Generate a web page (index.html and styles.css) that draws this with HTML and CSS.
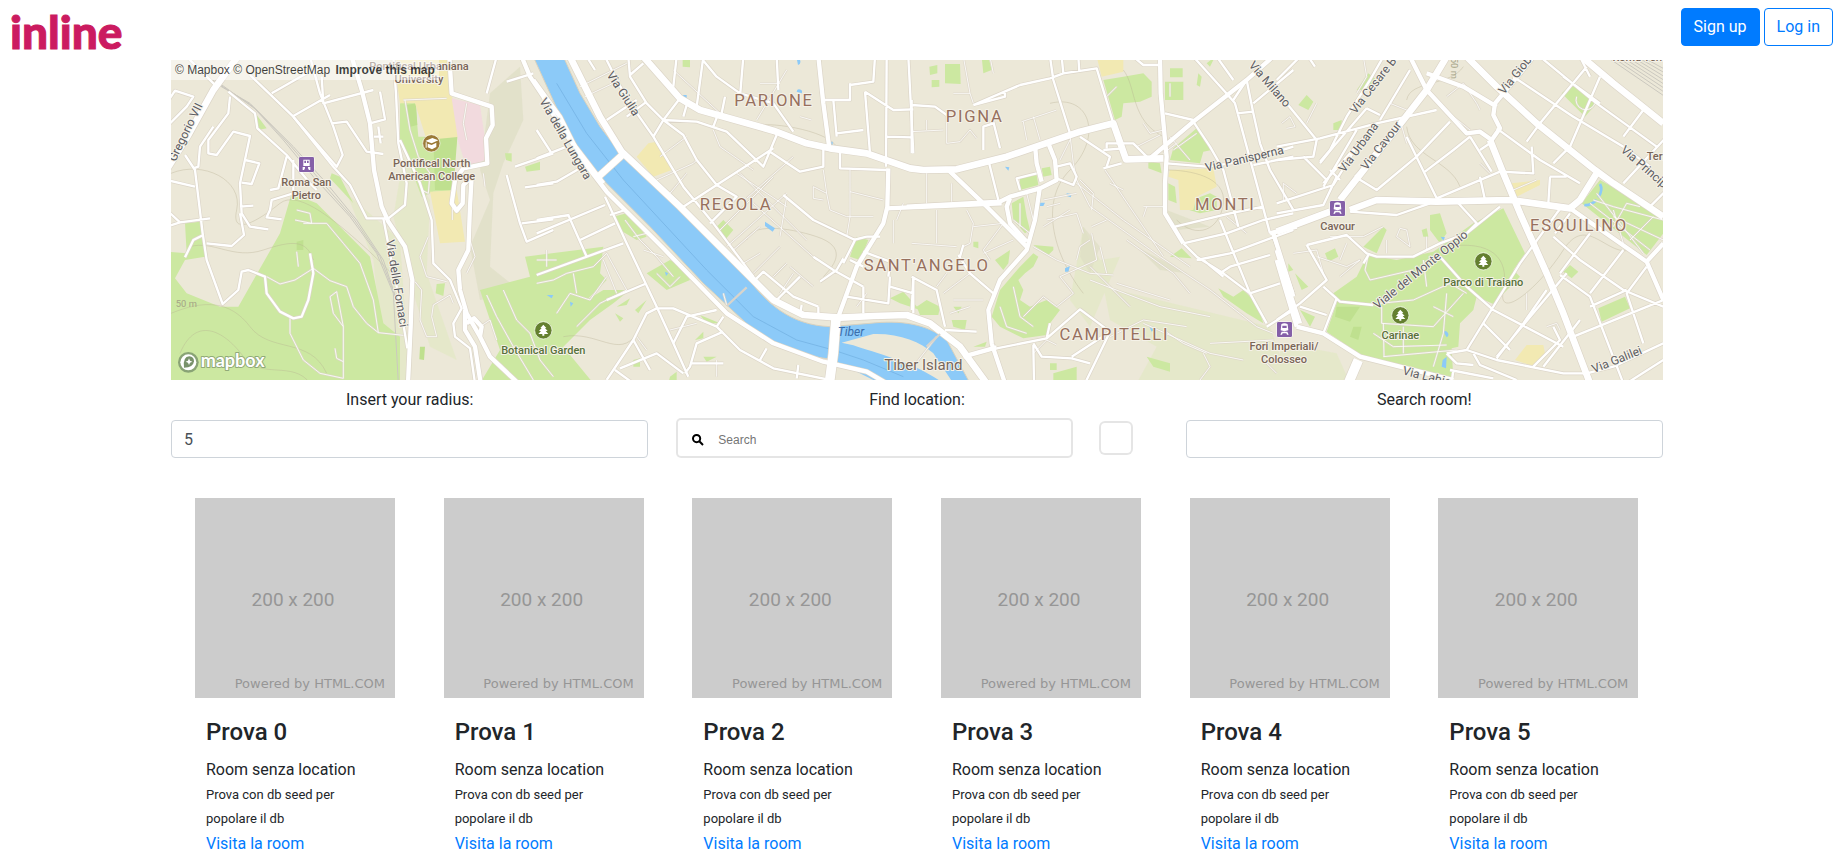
FILE: index.html
```html
<!DOCTYPE html>
<html lang="it">
<head>
<meta charset="utf-8">
<title>inline</title>
<link rel="stylesheet" href="styles.css">
</head>
<body>
<header class="topbar">
  <a class="brand" href="#">inline</a>
  <nav class="auth">
    <button class="btn btn-primary" type="button">Sign up</button>
    <button class="btn btn-outline" type="button">Log in</button>
  </nav>
</header>
<main class="page">
  <section class="map" aria-label="Map">
    <svg class="map-canvas" viewBox="3 0 4476 960" preserveAspectRatio="xMidYMid slice">
      <defs>
        <g id="roads">
          <!-- west -->
          <g>
            <path class="w4" d="M210-20L130 90 55 225-20 345"/>
            <path class="w3" d="M545-10L575 90 600 190 612 330 635 440 655 485 705 560 727 660 722 800 714 970"/>
            <path class="w3" d="M838-10L845 100 965 140 968 195 948 235 952 310 880 325 855 360 845 430 860 452 878 430 880 375 905 350 900 440 895 570 865 630 870 690 890 760 930 830 960 890 1045 970"/>
            <path class="w2" d="M50-10L140 80M240 45L370 170 490 320 540 375 590 475 655 475 705 435 710 370 685 250 678 100 670-10M690 240L750 370 785 480 790 610 840 660 875 745 850 790 855 830 900 865 915 970"/>
            <path class="w3" d="M885 750L885 810 915 860 932 970M890 790L912 775 935 800 930 830"/>
            <path class="w2" d="M175 95L255 160 262 205 350 285 420 370 440 390M420-10L450 100 490 200 518 285 500 320 370 170M305 100L410 40M370 168L480 105M455 50L460 130 610 90M485 190L530 185 560 230 590 275 640 282M600 190L645 178 630 95M612 230L640 230M625 200L632 250M180 110L175 160 115 240 115 280 140 285 190 215 240 228 210 370 215 460 240 500 295 508M225 300L268 310 245 372 215 368M350 290L325 385 300 390M370 300L370 400 305 420 300 450 290 472 335 478M210 440L250 437M-10 200L50 140 70 110 15 92-10 130M-10 360L75 380M45 285L75 330 98 520 110 600 158 732 205 690 215 635 235 630 285 650 290 700 330 755 370 775 395 770 415 720 430 640 420 580M-10 500L30 487 120 475M-10 450L30 487M45 592L70 540 100 525M110 550L185 558 222 525 210 460M70 325L85 320 90 260 130 200M640 475L660 580 690 730 712 865M980-10L950 100M1010 345L1050 490 1070 545 1150 510M1055 490L1150 478M1035 320L1150 280M1065 382L1150 370M1010 65L1090 40"/>
            <path class="w3" d="M1055-10L1080 50 1120 110 1170 200 1300 370"/>
            <path class="w1" d="M290 650L330 672 375 660 430 625 480 662 530 680 550 740 590 790 625 818 700 826M625 818L610 720 570 610 520 550 470 490 400 490M360 775L360 820 400 900 450 940 520 955 520 800 500 695 480 710 490 760 520 800M495 865L500 895 520 905M700 120L830 115M705 120L720 210 745 290 780 340 775 400 755 390M775 530L750 590 770 650 830 665M735 665L755 690 750 780 770 830 800 830 785 770 790 735 840 705 850 730M847 445L847 480M1000 690L1040 780 1080 820 1110 900 1150 950M950 705L980 770 1030 860 1090 960M900 540L915 590 890 640M940 340L945 380M890 130L880 190 890 240M930 800L960 780 980 840M380 575L385 620M380 450L420 460 425 490 375 480"/>
          </g>
          <!-- river side -->
          <g transform="translate(1110 0)">
            <path class="w4" d="M90-10L180 170 245 275 420 440 620 640 700 720 790 765 900 773 1000 768 1100 765 1170 790 1260 860 1340 970"/>
            <path class="w3" d="M-20 60L60 170 120 290 200 395 370 565 560 760 700 850 850 905 980 935 1040 970"/>
            <path class="w4" d="M250 282L170 355"/>
            <path class="w4" d="M310-10L420 115 480 150 700 212 800 250 870 265 980 280 1110 325 1150 330 1250 328 1400 290 1620 215 1720 190 1758 298 1870 295"/>
            <path class="w3" d="M835-10L850 130 868 265M1045 325L1042 440 1030 490 950 620 895 770"/>
            <path class="w5" d="M888 775L880 880 868 970"/>
            <path class="w3" d="M1040 445L1200 438 1385 430"/>
            <path class="w2" d="M195 410L260 550 350 740 400 850 445 950M-10 375L50 365 120 325M-10 295L80 260M-10 210L35 280M-10 520L195 435M120 540L225 490M85 465L140 590M-10 480L88 465M-10 645L250 550M200 720L315 672M210 465L255 450M350 745L320 760 280 840 200 960M350 745L400 745 530 800 600 870 700 925 870 960M530 750L440 770 400 850M550 770L530 800 550 820M550 815L470 850 450 920 435 940M240 925L350 880 430 940M280 840L330 930M225 930L280 970M450 910L550 910M660 900L680 865M770 955L775 915"/>
            <path class="w2" d="M140-10L165 30M195-10L230 60 270 130 340 230 430 380 520 490 640 650M265-10L270 50 320 130 370 180 470 185 560 215 670 320 710 225M270 45L310 10M410-10L400 80M490-10L470 140M320 125L260 170M200 180L290 120M340 230L370 180 430 225 470 300 530 375 590 410 510 490M430 440L530 375 700 265M370 180L420 115M430 170L440 135M520 200L535 160M480-10L530 50 600 100 700 130 760 215M710-10L715 90M545 160L555 110M610-10L600 110M850 270L850 320 780 335 690 275M900 275L900 325 1040 330M730 405L820 480 945 540M940 540L980 530M980 530L1020 530M910 610L945 540M820 590L880 630 970 680M910 595L890 630 840 665M640 665L670 635 760 710 835 740M710 720L780 650M785 735L780 765M835 740L835 770M920 710L1045 730 1050 650M970 680L970 760M1050 680L1120 700M1120 650L1115 750M970 575L1050 605 1045 650M930 600L970 620M855 120L930 120 930 75 1000 65 1005-10M930 110L930 70M880 120L890 230M975 95L990 280M890 220L970 210M975 95L1060 150 1120 148M1040-10L1038 320M1040 230L1115 232M1105-10L1120 280"/>
            <path class="w1" d="M120 80L260 10M135 110L240 60M400 30L540 160M590 340L740 440M620 415L760 290M640 430L830 600M600 340L800 540M540 510L700 350M560 560L740 400M580 570L660 500M720 530L740 410M610 610L660 580M640 640L720 560M700 650L740 610M750 620L820 680M760 640L720 700M850 330L860 400 820 380 820 415 850 420M860 400L870 450 920 470 1000 470M930 330L930 470 920 530M930 395L1030 420M650 180L740 30M660 70L720 70M780 170L815 180M520 210L540 260 640 330M350 360L460 310M390 400L440 340M360 290L440 230M460 310L470 300"/>
            <path class="w1" d="M-10 670L40 660 80 640 160 620 200 580 260 690 180 730 110 800M50 760L90 700 150 720 200 650M100 640L110 700M190 600L230 700M20 570L20 620M-10 600L50 600M255 480L300 540 350 590 400 650M280 530L320 520M310 570L370 590M390 810L470 790M290 830L320 870M530 900L530 950M550 700L560 735M350 640L390 680 420 650M950 740L980 700M1060 480L1060 550M1090 430L1070 480"/>
          </g>
          <!-- centre -->
          <g transform="translate(2220 0)">
            <path class="w3" d="M110 325L220 430 350 560M-10 440L270 425 300 410 390 385 440 360 435 300 415 250M375 255L380 310 395 365M300 415L290 440 300 490 350 545M390 380L375 480 350 570 270 660 235 750 245 850 285 970"/>
            <path class="w3" d="M750-10L752 100 765 240 770 290 765 370 765 460 820 550M1010 60L850 185 720 295M1010 60L1100-20M160 890L260 862"/>
            <path class="w2" d="M260 865L410 835 510 748 600 815 525 970M860 600L960 580 1150 510M600 815L485 890M370 855L372 970M370 850L395 890 485 895 540 910M420-10L430 60 480 220M330 75L420 55 460 40 560 25 610 190M455-10L460 40M505-10L508 35M190 135L330 75M190 135L285 110 285 95M250 185L270 265M220 270L220 200 250 190M235 300L265 420M5 135L75 140 110 165M5 120L5 280M440 320L480 310 500 350 490 375 440 355M330 390L320 355 380 340M510 230L600 290 590 320M580 325L635 310M590 265L590 250 670 250 710 290M580 270L640 265M670-10L700 15 750 15M765 160L850 180M770 310L890 320 1000 305 1150 260M1030 315L1150 290M850 185L900 260 940 330 985 500M850-10L945 95 975 130 1010 260 1080 520M920-10L970 60M1010 60L970 120M1010 60L1030 160 1050 250 1080 330 1150 450M980 160L1030 155M1030 130L1150 30M795 500L960 460 1060 440M820 550L950 520 1060 480 1150 460M820 550L860 590 940 640 1020 700 1070 790M930 480L1020 700 1110 670M930 640L960 620 1080 585M880 600L940 650M1090 530L1150 700M1070 800L1150 750M5 650L80 690 105 800M10 650L10 760M105 810L200 815M145 585L180 640 250 700M160 555L150 590M420 790L410 835"/>
            <path class="w3" d="M1080 520L1160 500M1090 520L1150 710"/>
            <path class="w1" d="M480 225L490 310 500 360 540 440 750 590 900 690 1040 800 1090 820M585 330L760 590M500 370L640 480 840 620M600 370L640 390M480 240L450 300M130 100L180 100M160-10L180 100 190 130M240-10L250 40M335 185L440 150M340 185L350 240M370 170L390 240M50 180L50 210M5 215L100 210M110 165L110 250 150 245 180 210 200 235M50 340L50 430M125 370L125 425M170 450L190 490 180 550 160 560M80 450L80 550M5 550L140 560M190 500L280 490 220 570 240 600M220 580L310 540M180 640L100 700M110 640L80 680M130 720L220 720M120 760L180 740M370 560L440 600 540 640 610 645M545 500L590 480M545 520L560 600 450 650 490 700 440 740 400 710 340 770M540 540L510 560 500 600M570 560L590 640M410 480L500 460 520 520M400 500L480 450M400 420L500 400M410 440L450 430M510 360L550 400 545 450M330 430L330 500M310 480L360 520M350 400L370 480M310 680L330 770 370 800M270 740L290 800 350 820M700 190L720 220 760 210M680 260L750 225M780 230L840 300M790 270L860 220M540 660L750 740 900 770M620 670L780 720M650 540L790 640 840 700M700 790L900 880 1000 900M880 880L900 920 870 960M760 810L820 850 890 880M900 850L1090 840M540 620L660 740M600 830L700 780 830 800M370 880L410 840 440 855M1060 900L1100 940M10 920L80 830M590 110L620 80M780 70L780 110M950 470L1010 520M760 280L800 250M700 440L760 440M710 440L700 470"/>
          </g>
          <!-- east -->
          <g transform="translate(3330 0)">
            <path class="w4" d="M500-10L440 90 370 180 290 280 180 420M560-10L650 80 770 190 945 330 1000 370 1150 470M905-10L1000 70 1150 190M210 450L290 420 470 425 690 420 870 445 900 420 950 340M-10 515L150 455M630 240L670 340 720 460 800 640 850 760 930 970"/>
            <path class="w3" d="M390-10L440 90 560 220 600 215 635 240 660 205 640 165 645 130 720 40 760-10M440 40L550 80 650 140M870 445L1100 605 1150 550M1100 605L1150 720M-10 570L30 700 60 790M-10 600L20 700 50 800M50 800L130 820 240 890 520 960"/>
            <path class="w5" d="M235 900L205 970"/>
            <path class="w2" d="M20 130L110 240 100 290-10 300M-10 260L120 235 290 190 470 150M-10 60L60-10M85-10L105 20M120 305L150 270 200 170 270 60 310-10M260 145L160 260 120 310M260 145L300 165M390 30L300 180M130 370L290 190M230 210L130 380M70 290L140 360M-10 430L160 375 230 260M-10 460L130 435 170 350M150 330L180 360M225 350L290 390 410 290 510 185M270 310L225 350M380 230L470 415M435 335L520 270 570 230M470 415L660 335 760 340 755 260M570 230L635 335M600 350L615 420M630 250L600 270M210 455L350 465 450 430M535 430L590 490 550 530M660 440L560 520 480 550 400 590 290 590 260 580 200 525 80 555M80 555L140 660 60 730-10 780M130 680L180 725 280 735M60 740L140 765M170 715L130 820M265 585L250 610M480 590L560 680 640 750 850 860M650 205L780 300 900 370M740 245L780 190 920 20M820 310L870 260 960 50M700 50L880 170 1030 260 1110 320M780-10L950 130 1130 260M850 50L960 130M1030 370L1160 230M900-10L930 50M1090 150L1030 230M1110 440L1160 390M810 350L860 350M810 350L805 430M850 435L830 460 720 610 560 870M820 530L900 600 1030 690 1150 740M825 520L870 460M930 520L840 640M840 645L930 710 1030 970M1030 570L930 700M1100 620L1040 700 1090 850M880 830L1150 720M930 740L1040 690M610 790L690 870M650 890L860 640M790 920L900 780M500 880L560 870 650 900 850 940 920 940 1000 920 1150 850M500 880L530 910 580 915M580 880L600 915 710 960M510 930L640 955M650 895L730 790 800 690M760 920L840 840 820 800M520 930L515 970M1040 970L1150 900"/>
            <path class="w1" d="M250-10L260 50 230 100M5 190L30 170 45 200 20 205M110 130L80 190M330 130L380 150M10 420L10 370 50 400M40 580L110 570 130 640M150 530L250 530 310 500M200 550L180 600M110 590L200 620 240 600 180 650M360 505L350 530 390 560 380 510 360 505M320 540L320 580M440 530L440 570M265 585L255 630 270 660 400 630M300 730L400 720 510 670 560 700M430 600L440 680M305 740L305 790 460 800 550 700M280 820L340 860 500 855M310 890L530 870M370 800L370 880M310 790L312 890M460 740L520 770M500 700L490 820 460 920M600 310L630 340M500 110L550 70 590 130 600 150M570 210L520 170M360 180L380 250M700 390L770 360M740 700L740 750M800 800L830 790 840 810"/>
            <path class="w1" d="M950 400L1090 580M930 430L1110 570M940 420L1000 440 1150 480M1000 470L1150 540M1000 500L1040 430 1080 440M1050 540L1120 470M1030 550L1000 450M890 110A28 28 0 1 0 945 130"/>
          </g>
        </g>
      </defs>
      <rect class="land" x="0" y="-10" width="4500" height="990"/>
      <g class="shade">
        <path d="M960 100L1050 20 1060 180 1000 310 970 400 960 620 1060 700 930 720 900 560 960 420 930 330Z"/>
        <path class="light" d="M700 290L780 420 770 640 860 900 780 860 730 700 670 470ZM530 400L690 540 720 970 650 970 610 600ZM2800 680L3300 800 3360 970 2900 970 2960 860 2820 780ZM2740 500L2790 600 2850 590 2760 800 2700 720ZM3340 850L3500 880 3540 970 3300 970Z"/>
        <path d="M2740 500L2790 560 2760 640 2730 590ZM2900 560L3050 640 2970 630ZM2990 450L3120 500 3020 510ZM60 750L110 790 100 850 60 800Z"/>
      </g>
      <g class="green">
        <path d="M-10 575L50 580 45 490 90 485 105 590 45 600 15 655 50 700 150 740 205 740 330 520 365 400 440 430 600 590 640 790 690 830 690 970-10 970ZM260 165L290 205 265 210ZM485 340L510 350 550 430 480 355ZM690 130L735 120 745 230 862 230 850 330 850 392 790 395 755 410 690 240ZM800 672L825 670 820 708 797 700ZM1065 590L1300 560 1290 640 1310 660 1250 720 1300 690 1380 690 1330 730 1260 780 1180 860 1270 970 930 970 990 870 930 690 1080 650ZM1005 280L1025 280 1025 305 1008 300ZM1065 320L1110 305 1110 330 1070 335Z"/>
        <path d="M1330 470L1370 460 1400 490 1430 530 1400 540 1350 510ZM1430 640L1500 600 1550 630 1560 660 1490 690ZM1560 455L1590 480M1640 500L1660 480 1690 510 1665 540ZM2060 530L2095 540 2070 600 2040 590ZM2160 715L2200 695 2250 750 2190 730ZM1340 740L1380 715 1370 735ZM1395 750L1430 720 1405 760ZM1335 760L1360 775 1350 785ZM1590 765L1650 790 1610 790ZM1575 840L1600 815 1600 835ZM1600 890L1640 890 1610 905ZM1500 950L1520 935 1520 970 1495 970ZM1390 900L1410 895 1410 920 1390 920ZM1538-10L1560-10 1560 22 1538 20Z"/>
        <g transform="translate(2220 0)"><path d="M105 12L150 12 152 72 105 70ZM58 20L82 15 82 40 60 45ZM65 60L88 60 88 80 65 82ZM215-10L235-10 245 30 220 40ZM640 50L700 40 725 65 725 110 690 125 640 130 635 170 615 180 580 60ZM780 25L818 25 818 52 780 52ZM765 65L820 65 820 120 765 120ZM865 40L875 50 870 80 860 75ZM890 10L915-10 900 20ZM715 305L750 310 755 340 715 325ZM790 265L860 205 905 270 880 275 870 310 780 300ZM775 370L795 380 800 430 775 420ZM820 430L900 400 920 410 920 450 870 460 820 445ZM330 355L380 345 385 375 330 390ZM395 325L420 320 425 345 400 350ZM305 430L340 410 350 470 360 510 345 520 310 480ZM370 555L430 560 430 570 415 585ZM255 600L300 570 295 610 280 630ZM370 580L385 590 370 620 345 640 325 660 340 690 330 720 360 740 410 720 450 750 420 790 410 825 340 835 270 800 245 770 270 690 330 620ZM190 545L205 545 205 565 190 560ZM20 740L50 720 90 740 85 765 30 765ZM130 740L155 740 145 760ZM125 780L170 780 165 810 130 800ZM190 860L230 845 225 860ZM420 910L440 910 440 930 420 930ZM430 940L500 920 500 970 430 970ZM780 590L815 565 845 595ZM925 685L970 710 1000 690 1040 730 1060 790 1010 760 940 710ZM710 890L780 910 780 935 730 920Z"/></g>
        <g transform="translate(3330 0)"><path d="M230 90L265 40 290 60 265 90ZM55 135L80 105 100 125 85 150ZM160 190L185 180 185 210 160 210ZM845 100L880 70 950 130 915 170ZM450 465L480 460 500 520 480 550 450 510ZM425 510L440 505 445 530 430 530ZM250 560L310 500 320 510 290 580ZM250 610L265 585 350 600 460 575 580 490 670 445 735 580 700 630 720 650 640 732 590 710 580 750 540 790 535 860 515 865 520 955 370 920 250 890 140 815 170 730 160 700 230 650ZM135 580L165 565 175 590 145 605ZM25 610L40 630 25 635ZM45 640L85 680 65 690ZM60 750L105 770 90 800ZM905 430L960 360 1050 410 1150 480 1150 520 1100 585ZM850 635L870 615 895 635 875 655ZM955 745L1035 710 1050 745 965 785Z"/></g>
      </g>
      <path class="dark-green" d="M710 135L738 130 742 195 720 200ZM790 235L862 230 850 390 795 390ZM750 860L765 860 762 900 748 898ZM380 545L400 540 400 570 380 570ZM3500 740L3570 740 3540 785 3495 770ZM3550 800L3575 800 3565 840 3540 830Z"/>
      <g class="yellow">
        <path d="M680 60L835 60 845 110 870 150 870 230 770 240 735 130 690 130ZM780 395L860 390 885 545 810 550ZM680-10L840-10 840 60 680 60ZM1400 290L1435 250 1460 245 1505 330 1450 350ZM2780-10L2860-10 2860 35 2795 50ZM3000 330L3130 325 3140 380 3080 410 3070 450 3030 450 3025 360 2995 350ZM4025 370L4110 360 4110 375 4040 410ZM4035 900L4070 855 4120 855 4125 880 4095 920Z"/>
      </g>
      <path class="pink" d="M845 115L930 135 950 270 945 300 890 325 865 245Z"/>
      <g class="contours">
        <path d="M3 340C100 300 220 360 200 450S280 470 330 430 480 470 560 540 660 640 690 660M3 760C100 720 180 720 240 800S420 830 470 940M30 880C80 760 170 820 220 890S370 900 420 970M60 560C130 540 190 600 280 570S410 540 430 600M1730 200C1790 180 1970 210 2000 260M1730 540C1740 490 1850 500 1940 530S2000 610 1960 650M1180 830C1280 810 1350 900 1400 820M2640 130C2760 100 2800 230 2700 330S2660 600 2740 700M3020 480C3080 540 3150 510 3160 430S3060 330 2990 330M3710 120C3720 60 3840 80 3880 20M3710 200C3720 290 3840 300 3870 380M3830 560C3960 540 4020 590 4000 690S4110 680 4180 570 4310 590 4380 570M2860 30C2900 80 2880 180 2980 230"/>
      </g>
      <path class="rail" d="M120 60L240 130 340 240 430 350 540 470 620 580 670 700 685 970M128 60L250 140 355 250 450 360 550 475 630 590 680 720M135 60L260 150 370 260 470 370 560 480 640 600 690 750"/>
      <g class="water">
        <path d="M1090-10L1180-10 1230 100 1290 200 1345 272 1520 440 1730 650C1790 730 1860 795 1980 800L2100 790C2190 780 2270 790 2330 840L2400 970 2280 970 2220 940 2110 905 1990 898C1900 890 1810 860 1740 800L1600 670 1440 500 1260 320 1190 210Z"/>
      </g>
      <path class="island" d="M2015 848L2110 822C2190 820 2250 845 2290 880L2350 970 2320 970C2240 910 2120 880 2050 856Z"/>
      <path class="water-plain" d="M1995 855C2090 862 2200 905 2300 970L2130 970 1990 900Z"/>
      <path class="flow" d="M1160 70L1250 220 1360 360 1610 630 1750 770 1880 840 1990 870 2080 900 2200 950"/>
      <path class="pond" d="M1785 485L1815 505 1808 515 1785 498ZM1540 105L1550 105 1550 115 1538 112ZM1880-5A8 9 0 1 1 1884 15ZM1880 95A8 8 0 1 1 1895 100ZM1982 245L1988 245 1988 260 1983 260ZM1130 705L1150 705 1145 715ZM1485 635L1495 640 1488 648ZM1200 725L1210 730 1202 740ZM2505 320L2518 322 2515 332ZM2690 400L2705 402 2702 412 2690 408ZM2605 428L2625 428 2620 438 2605 438ZM2685 625L2700 618 2695 635 2685 635ZM2938 800L2955 808 2945 815ZM3812 530L3825 532 3820 542ZM3820 815A8 8 0 1 1 3830 832ZM3818 900L3830 890 3828 925 3815 920Z"/>
      <path class="pond-line" d="M4290 372Q4300 390 4285 412M4243 435Q4260 438 4280 420"/>
      <use href="#roads" class="casing"/>
      <use href="#roads" class="fill"/>
      <path class="footbridge" d="M1670 738L1730 682M2270 860L2310 822"/>
      <path class="rail-hatch" d="M4310-10L4500 120M4325-10L4500 108M4340-10L4500 96M4355-10L4500 84M4370-10L4500 72M4385-10L4500 60M4400-10L4500 48M4415-10L4500 36"/>

      <g class="badges">
        <g><rect x="387" y="291" width="45" height="45" rx="4"/><path class="glyph" d="M400 299H419V318H400ZM403 302V309H408V302ZM411 302V309H416V302ZM398 321H405V326H414V321H421V330H416V326H403V330H398Z"/></g>
        <g transform="translate(3110 130)"><rect x="370" y="293" width="45" height="45" rx="4"/><path class="glyph" d="M383 300Q392 294 402 300L404 318Q392 323 381 318ZM386 304V311H399V304ZM384 322H401L405 331H400L398 327H387L385 331H380Z"/></g>
        <g transform="translate(2951 493)"><rect x="370" y="293" width="45" height="45" rx="4"/><path class="glyph" d="M383 300Q392 294 402 300L404 318Q392 323 381 318ZM386 304V311H399V304ZM384 322H401L405 331H400L398 327H387L385 331H380Z"/></g>
      </g>
      <circle class="school" cx="784" cy="250" r="26"/>
      <path class="glyph" d="M766 243L787 234 805 241 785 250ZM773 251L785 255 799 248V261L786 268 773 262ZM767 247H770V263H767Z"/>
      <g class="parks">
        <g transform="translate(1120 811)"><circle r="26"/><path class="glyph" d="M0-17L9-7H5L13 2H7L15 11H3V16H-3V11H-15L-7 2H-13L-5-7H-9Z"/></g>
        <g transform="translate(3940 604)"><circle r="26"/><path class="glyph" d="M0-17L9-7H5L13 2H7L15 11H3V16H-3V11H-15L-7 2H-13L-5-7H-9Z"/></g>
        <g transform="translate(3691 766)"><circle r="26"/><path class="glyph" d="M0-17L9-7H5L13 2H7L15 11H3V16H-3V11H-15L-7 2H-13L-5-7H-9Z"/></g>
      </g>
      <g class="poi">
        <text x="747" y="29">Pontifical Urbaniana</text><text x="747" y="69">University</text>
        <text x="409" y="377">Roma San</text><text x="409" y="417">Pietro</text>
        <text x="785" y="321">Pontifical North</text><text x="785" y="361">American College</text>
        <text x="3503" y="509">Cavour</text>
        <text x="3342" y="870">Fori Imperiali/</text><text x="3342" y="909">Colosseo</text>
        <text x="4486" y="299">Termini</text><text x="4430" y="4">Roma Termini</text>
        <g class="park-name"><text x="1120" y="882">Botanical Garden</text><text x="3940" y="677">Parco di Traiano</text><text x="3691" y="838">Carinae</text></g>
      </g>
      <g class="district">
        <text x="1812" y="138">PARIONE</text><text x="1698" y="450">REGOLA</text><text x="2414" y="185">PIGNA</text><text x="2270" y="633">SANT'ANGELO</text><text x="3166" y="449">MONTI</text><text x="2833" y="839">CAMPITELLI</text><text x="4227" y="513">ESQUILINO</text>
      </g>
      <g class="street">
        <text transform="translate(57 222) rotate(-64)">Gregorio VII</text>
        <text transform="translate(669 672) rotate(81)">Via delle Fornaci</text>
        <text transform="translate(1176 242) rotate(60)">Via della Lungara</text>
        <text transform="translate(1350 107) rotate(57)">Via Giulia</text>
        <text transform="translate(3290 80) rotate(49)">Via Milano</text>
        <text transform="translate(3226 308) rotate(-13)">Via Panisperna</text>
        <text transform="translate(3640 56) rotate(-52)">Via Cesare Balbo</text>
        <text transform="translate(3575 269) rotate(-54)">Via Urbana</text>
        <text transform="translate(3643 264) rotate(-52)">Via Cavour</text>
        <text transform="translate(4061 32) rotate(-51)">Via Gioberti</text>
        <text transform="translate(4450 360) rotate(41)">Via Principe Am.</text>
        <text transform="translate(3759 638) rotate(-39)">Viale del Monte Oppio</text>
        <text transform="translate(4345 910) rotate(-22)">Via Galilei</text>
        <text transform="translate(3796 968) rotate(14)">Via Labicana</text>
      </g>
      <text class="elevation" x="49" y="741">50 m</text>
      <text class="elevation" transform="translate(3842 25) rotate(90)">50 m</text>
      <text class="river-name" x="2043" y="827">Tiber</text>
      <text class="island-name" x="2260" y="931">Tiber Island</text>
      <g class="logo-mark">
        <circle class="halo" cx="55" cy="907" r="31"/><circle class="ring" cx="55" cy="907" r="24"/>
        <path class="pin" d="M42 923Q38 890 58 889 72 890 72 904 70 923 42 923Z"/><path class="star" d="M57 895L60 902 67 905 60 908 57 915 54 908 47 905 54 902Z"/>
        <text x="92" y="920">mapbox</text>
      </g>
    </svg>
    <div class="attribution"><a href="#">© Mapbox</a> <a href="#">© OpenStreetMap</a> <a class="improve" href="#">Improve this map</a></div>
  </section>

  <form class="filters">
    <div class="field"><label for="radius">Insert your radius:</label><input class="control" id="radius" type="text" value="5"></div>
    <div class="field">
      <label for="location">Find location:</label>
      <div class="location-row">
        <div class="geocoder">
          <svg class="search-icon" viewBox="0 0 12 12"><circle cx="4.600" cy="4.600" r="3.600"/><path d="M7.300 7.300L11 11"/></svg>
          <input id="location" type="text" placeholder="Search">
        </div>
        <button class="locate" type="button" aria-label="Locate me"></button>
      </div>
    </div>
    <div class="field"><label for="room">Search room!</label><input class="control" id="room" type="text"></div>
  </form>

  <section class="rooms">
    <article class="room"><div class="thumb"><span class="size">200 x 200</span><span class="credit">Powered by HTML.COM</span></div><div class="room-body"><h4>Prova 0</h4><p>Room senza location</p><p class="note">Prova con db seed per popolare il db</p><a href="#">Visita la room</a></div></article>
    <article class="room"><div class="thumb"><span class="size">200 x 200</span><span class="credit">Powered by HTML.COM</span></div><div class="room-body"><h4>Prova 1</h4><p>Room senza location</p><p class="note">Prova con db seed per popolare il db</p><a href="#">Visita la room</a></div></article>
    <article class="room"><div class="thumb"><span class="size">200 x 200</span><span class="credit">Powered by HTML.COM</span></div><div class="room-body"><h4>Prova 2</h4><p>Room senza location</p><p class="note">Prova con db seed per popolare il db</p><a href="#">Visita la room</a></div></article>
    <article class="room"><div class="thumb"><span class="size">200 x 200</span><span class="credit">Powered by HTML.COM</span></div><div class="room-body"><h4>Prova 3</h4><p>Room senza location</p><p class="note">Prova con db seed per popolare il db</p><a href="#">Visita la room</a></div></article>
    <article class="room"><div class="thumb"><span class="size">200 x 200</span><span class="credit">Powered by HTML.COM</span></div><div class="room-body"><h4>Prova 4</h4><p>Room senza location</p><p class="note">Prova con db seed per popolare il db</p><a href="#">Visita la room</a></div></article>
    <article class="room"><div class="thumb"><span class="size">200 x 200</span><span class="credit">Powered by HTML.COM</span></div><div class="room-body"><h4>Prova 5</h4><p>Room senza location</p><p class="note">Prova con db seed per popolare il db</p><a href="#">Visita la room</a></div></article>
  </section>
</main>
</body>
</html>
```
FILE: styles.css
```css
*, *::before, *::after { box-sizing: border-box; }
body { margin: 0; background: #fff; color: #212529; font: 16px/24px Roboto, sans-serif; }
a { color: #007bff; text-decoration: none; }
h4, p { margin: 0; }

.topbar { display: flex; justify-content: space-between; align-items: flex-start; height: 60px; padding: 0 6px 0 10px; }
.brand { padding-top: 4px; color: #cb1b60; font: 900 46px/56px Lato, sans-serif; -webkit-text-stroke: 1px #cb1b60; }
.auth { display: flex; gap: 4px; padding-top: 8px; }
.btn { height: 38px; padding: 0 12px; border: 1px solid #007bff; border-radius: 4px; font: 16px/24px Roboto, sans-serif; cursor: pointer; }
.btn-primary { background: #007bff; color: #fff; }
.btn-outline { background: #fff; color: #007bff; }

.page { padding: 0 176px 0 171px; }
.map { position: relative; height: 320px; overflow: hidden; }
.map-canvas { display: block; width: 100%; height: 100%; }
.attribution { position: absolute; left: 0; top: 0; padding: 0 4px; background: rgba(255, 255, 255, 0.5); font: 12px/20px "Liberation Sans", Arial, sans-serif; }
.attribution a { color: rgba(0, 0, 0, 0.75); }
.attribution .improve { margin-left: 2px; font-weight: 700; }

.land { fill: #ece8d8; }
.shade path { fill: #dedec4; opacity: 0.7; }
.shade .light { fill: #e2e8c4; }
.green { fill: #cce8a1; }
.dark-green { fill: #bfe08f; }
.yellow { fill: #f2e9b2; }
.pink { fill: #f2dade; }
.contours { fill: none; stroke: #b5ad90; stroke-width: 3; opacity: 0.35; }
.rail, .rail-hatch { fill: none; stroke: #cbc8bf; stroke-width: 3; }
.water { fill: #8ccaf8; stroke: #d9d2bf; stroke-width: 3; }
.water-plain { fill: #8ccaf8; }
.island { fill: #ece8d8; }
.flow { fill: none; stroke: #6faee0; stroke-width: 2; }
.pond { fill: #8ccaf8; }
.pond-line { fill: none; stroke: #8ccaf8; stroke-width: 8; }
.footbridge { stroke: #d8d4cc; stroke-width: 7; }
#roads path { fill: none; stroke-linejoin: round; stroke-width: calc(var(--w) + var(--edge)); }
.w1 { --w: 3px; opacity: 0.8; }
.w2 { --w: 7px; }
.w3 { --w: 13px; }
.w4 { --w: 20px; }
.w5 { --w: 29px; }
.casing { --edge: 4px; stroke: #dcd5c8; }
.fill { --edge: 0px; stroke: #fff; }
.badges { fill: #8560a8; stroke: #fff; stroke-width: 3; paint-order: stroke; }
.glyph { fill: #fff; fill-rule: evenodd; stroke: none; }
.school { fill: #9b7a37; stroke: #fff; stroke-width: 2; }
.parks circle { fill: #64802f; stroke: #fff; stroke-width: 2; }
.map-canvas text { font-family: Roboto, sans-serif; text-anchor: middle; paint-order: stroke; stroke: #f5f2e8; stroke-width: 6px; stroke-linejoin: round; }
.map-canvas .poi text { font-size: 33px; font-weight: 500; fill: #796557; }
.map-canvas .park-name text { fill: #58713a; }
.map-canvas .district text { font-size: 50px; fill: #97705e; letter-spacing: 5px; }
.map-canvas .street text { font-size: 36px; fill: #5c5c62; }
.map-canvas .elevation { font-size: 28px; fill: #a4a386; stroke: none; }
.map-canvas .river-name { font-size: 36px; font-style: italic; fill: #3a6eac; stroke: none; }
.map-canvas .island-name { font-size: 45px; fill: #76665c; }
.logo-mark .halo { fill: #78916a; opacity: 0.8; }
.logo-mark .ring { fill: #fff; }
.logo-mark .pin { fill: #78916a; }
.logo-mark .star { fill: #fff; }
.map-canvas .logo-mark text { text-anchor: start; font: 700 54px Lato, sans-serif; fill: #fff; stroke: #91aa78; }

.filters { display: grid; grid-template-columns: repeat(3, 1fr); gap: 30px; padding-top: 8px; }
.field { text-align: center; min-width: 0; }
.field label { display: block; margin-bottom: 8px; }
.control { display: block; width: 100%; height: 38px; padding: 0 12px; border: 1px solid #ced4da; border-radius: 4px; background: #fff; color: #495057; font: 16px/24px Roboto, sans-serif; }
.location-row { display: flex; gap: 30px; align-items: center; padding-right: 25px; }
.geocoder { flex: 1; display: flex; align-items: center; gap: 14px; height: 36px; padding-left: 14px; border-radius: 3px; background: #fff; box-shadow: 0 0 0 2px rgba(0, 0, 0, 0.1); }
.geocoder input { flex: 1; min-width: 0; padding: 3px 0 0; border: 0; outline: 0; background: transparent; font: 12px/18px "Liberation Sans", Arial, sans-serif; }
.geocoder input::placeholder { color: #757575; }
.search-icon { width: 12px; height: 12px; margin-top: 4px; fill: none; stroke: #000; stroke-width: 2; }
.locate { width: 30px; height: 30px; padding: 0; border: 0; border-radius: 4px; background: #fff; box-shadow: 0 0 0 2px rgba(0, 0, 0, 0.1); }

.rooms { display: grid; grid-template-columns: repeat(6, 1fr); padding-top: 40px; }
.room { width: 200px; margin-left: 24px; }
.thumb { display: grid; grid-template-rows: 1fr auto; height: 200px; padding: 90px 10px 4px; background: #ccc; color: #969696; }
.size { padding-right: 4px; text-align: center; font-size: 19px; }
.credit { text-align: right; font: 13px/20px "DejaVu Sans", sans-serif; white-space: nowrap; }
.room-body { padding: 20px 11px 0; }
.room h4 { margin-bottom: 11px; font-size: 24px; line-height: 29px; font-weight: 500; }
.note { padding: 1px 0; font-size: 13px; }
.room-body a { display: block; }
```
